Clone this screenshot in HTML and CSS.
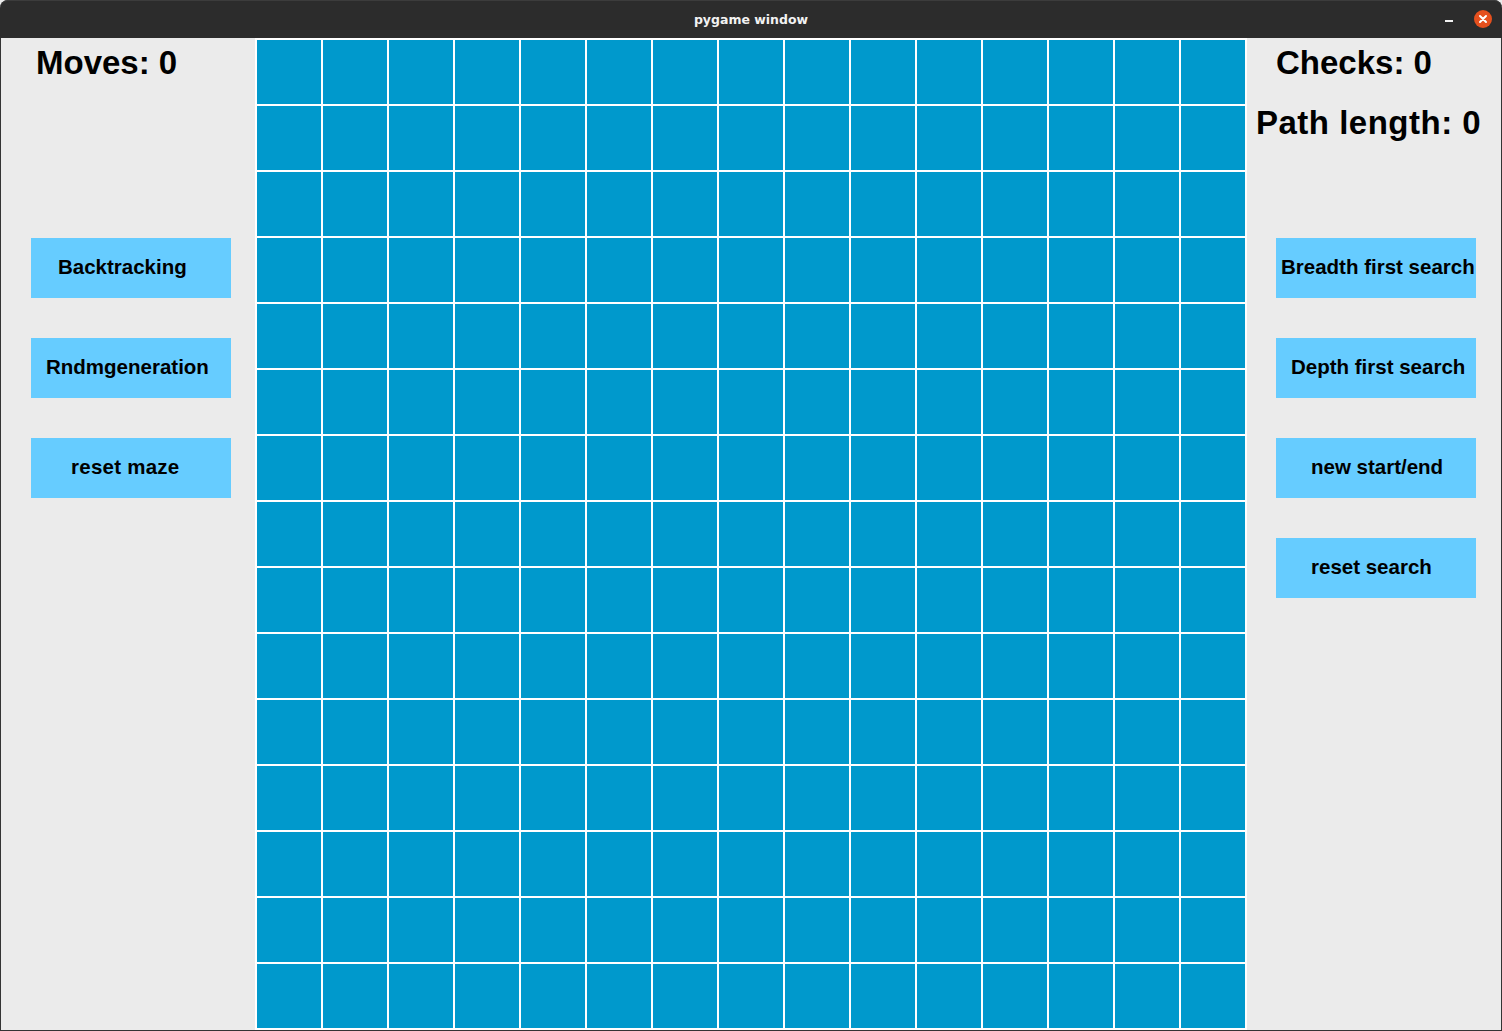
FILE: index.html
```html
<!DOCTYPE html>
<html lang="en">
<head>
<meta charset="utf-8">
<title>pygame window</title>
<link rel="stylesheet" href="styles.css">
</head>
<body>
<div class="window">
  <header class="titlebar">
    <span></span>
    <span class="title">pygame window</span>
    <div class="controls">
      <span class="min"></span>
      <span class="close"><svg width="18" height="18" viewBox="0 0 18 18"><circle cx="9" cy="9" r="9" fill="#e5501e"/><path d="M6 6 L12 12 M12 6 L6 12" stroke="#fff" stroke-width="2" stroke-linecap="round"/></svg></span>
    </div>
  </header>
  <main class="content">
    <aside class="panel left">
      <div class="stat moves">Moves: 0</div>
      <div class="buttons">
        <div class="btn p28">Backtracking</div>
        <div class="btn p16">Rndmgeneration</div>
        <div class="btn p40">reset maze</div>
      </div>
    </aside>
    <section class="grid">
      <div class="c"></div><div class="c"></div><div class="c"></div><div class="c"></div><div class="c"></div><div class="c"></div><div class="c"></div><div class="c"></div><div class="c"></div><div class="c"></div><div class="c"></div><div class="c"></div><div class="c"></div><div class="c"></div><div class="c"></div>
      <div class="c"></div><div class="c"></div><div class="c"></div><div class="c"></div><div class="c"></div><div class="c"></div><div class="c"></div><div class="c"></div><div class="c"></div><div class="c"></div><div class="c"></div><div class="c"></div><div class="c"></div><div class="c"></div><div class="c"></div>
      <div class="c"></div><div class="c"></div><div class="c"></div><div class="c"></div><div class="c"></div><div class="c"></div><div class="c"></div><div class="c"></div><div class="c"></div><div class="c"></div><div class="c"></div><div class="c"></div><div class="c"></div><div class="c"></div><div class="c"></div>
      <div class="c"></div><div class="c"></div><div class="c"></div><div class="c"></div><div class="c"></div><div class="c"></div><div class="c"></div><div class="c"></div><div class="c"></div><div class="c"></div><div class="c"></div><div class="c"></div><div class="c"></div><div class="c"></div><div class="c"></div>
      <div class="c"></div><div class="c"></div><div class="c"></div><div class="c"></div><div class="c"></div><div class="c"></div><div class="c"></div><div class="c"></div><div class="c"></div><div class="c"></div><div class="c"></div><div class="c"></div><div class="c"></div><div class="c"></div><div class="c"></div>
      <div class="c"></div><div class="c"></div><div class="c"></div><div class="c"></div><div class="c"></div><div class="c"></div><div class="c"></div><div class="c"></div><div class="c"></div><div class="c"></div><div class="c"></div><div class="c"></div><div class="c"></div><div class="c"></div><div class="c"></div>
      <div class="c"></div><div class="c"></div><div class="c"></div><div class="c"></div><div class="c"></div><div class="c"></div><div class="c"></div><div class="c"></div><div class="c"></div><div class="c"></div><div class="c"></div><div class="c"></div><div class="c"></div><div class="c"></div><div class="c"></div>
      <div class="c"></div><div class="c"></div><div class="c"></div><div class="c"></div><div class="c"></div><div class="c"></div><div class="c"></div><div class="c"></div><div class="c"></div><div class="c"></div><div class="c"></div><div class="c"></div><div class="c"></div><div class="c"></div><div class="c"></div>
      <div class="c"></div><div class="c"></div><div class="c"></div><div class="c"></div><div class="c"></div><div class="c"></div><div class="c"></div><div class="c"></div><div class="c"></div><div class="c"></div><div class="c"></div><div class="c"></div><div class="c"></div><div class="c"></div><div class="c"></div>
      <div class="c"></div><div class="c"></div><div class="c"></div><div class="c"></div><div class="c"></div><div class="c"></div><div class="c"></div><div class="c"></div><div class="c"></div><div class="c"></div><div class="c"></div><div class="c"></div><div class="c"></div><div class="c"></div><div class="c"></div>
      <div class="c"></div><div class="c"></div><div class="c"></div><div class="c"></div><div class="c"></div><div class="c"></div><div class="c"></div><div class="c"></div><div class="c"></div><div class="c"></div><div class="c"></div><div class="c"></div><div class="c"></div><div class="c"></div><div class="c"></div>
      <div class="c"></div><div class="c"></div><div class="c"></div><div class="c"></div><div class="c"></div><div class="c"></div><div class="c"></div><div class="c"></div><div class="c"></div><div class="c"></div><div class="c"></div><div class="c"></div><div class="c"></div><div class="c"></div><div class="c"></div>
      <div class="c"></div><div class="c"></div><div class="c"></div><div class="c"></div><div class="c"></div><div class="c"></div><div class="c"></div><div class="c"></div><div class="c"></div><div class="c"></div><div class="c"></div><div class="c"></div><div class="c"></div><div class="c"></div><div class="c"></div>
      <div class="c"></div><div class="c"></div><div class="c"></div><div class="c"></div><div class="c"></div><div class="c"></div><div class="c"></div><div class="c"></div><div class="c"></div><div class="c"></div><div class="c"></div><div class="c"></div><div class="c"></div><div class="c"></div><div class="c"></div>
      <div class="c"></div><div class="c"></div><div class="c"></div><div class="c"></div><div class="c"></div><div class="c"></div><div class="c"></div><div class="c"></div><div class="c"></div><div class="c"></div><div class="c"></div><div class="c"></div><div class="c"></div><div class="c"></div><div class="c"></div>
    </section>
    <aside class="panel right">
      <div class="stat checks">Checks: 0</div>
      <div class="stat path">Path length: 0</div>
      <div class="buttons">
        <div class="btn p6">Breadth first search</div>
        <div class="btn p16">Depth first search</div>
        <div class="btn p35">new start/end</div>
        <div class="btn p35">reset search</div>
      </div>
    </aside>
  </main>
</div>
</body>
</html>
```

FILE: styles.css
```css
* { box-sizing: border-box; }
html, body { margin: 0; padding: 0; }
body {
  background: #ececec;
  width: 1502px;
  height: 1031px;
  overflow: hidden;
}
.window {
  width: 1502px;
  height: 1031px;
  display: flex;
  flex-direction: column;
}
.titlebar {
  height: 38px;
  background: #2c2c2c;
  border-radius: 8px 8px 0 0;
  display: grid;
  grid-template-columns: 1fr auto 1fr;
  align-items: center;
  box-shadow: inset 0 1px 0 #3c3c3c;
}
.title {
  font-family: "DejaVu Sans", sans-serif;
  font-weight: bold;
  font-size: 12.5px;
  color: #f2f2f2;
  padding-top: 1px;
}
.controls {
  display: flex;
  justify-content: flex-end;
  align-items: center;
  gap: 21px;
  padding-right: 10px;
}
.min {
  display: block;
  width: 8px;
  height: 2px;
  background: #f2f2f2;
  margin-top: 4px;
}
.close { display: block; height: 18px; margin-top: -1px; }
.close svg { display: block; }
.content {
  height: 993px;
  display: flex;
  background: #ebebeb;
  border: 1px solid #343434;
  border-top: 0;
}
.panel {
  width: 254px;
  flex: none;
  font-family: "Liberation Sans", Arial, sans-serif;
  font-weight: bold;
  color: #000;
}
.stat {
  font-size: 33px;
  line-height: 33px;
  white-space: nowrap;
}
.left { padding-top: 8px; }
.moves { margin-left: 35px; }
.left .buttons { margin-top: 159px; }
.right { padding-top: 8px; }
.checks { margin-left: 29px; }
.path { margin-left: 9px; margin-top: 27px; letter-spacing: 0.5px; }
.right .buttons { margin-top: 99px; }
.buttons {
  display: flex;
  flex-direction: column;
  gap: 40px;
  margin-left: 30px;
}
.right .buttons { margin-left: 29px; }
.btn {
  width: 200px;
  height: 60px;
  background: #66ccff;
  font-size: 20.5px;
  line-height: 58px;
  white-space: nowrap;
}
.p6 { padding-left: 5px; }
.p16 { padding-left: 15px; }
.p28 { padding-left: 27px; }
.p35 { padding-left: 35px; }
.p40 { padding-left: 40px; letter-spacing: 0.25px; }
.grid {
  width: 992px;
  height: 992px;
  flex: none;
  background: #ffffff;
  padding: 2px;
  display: grid;
  grid-template-columns: repeat(15, 64px);
  grid-template-rows: repeat(15, 64px);
  gap: 2px;
}
.c { background: #0099cc; }
```
